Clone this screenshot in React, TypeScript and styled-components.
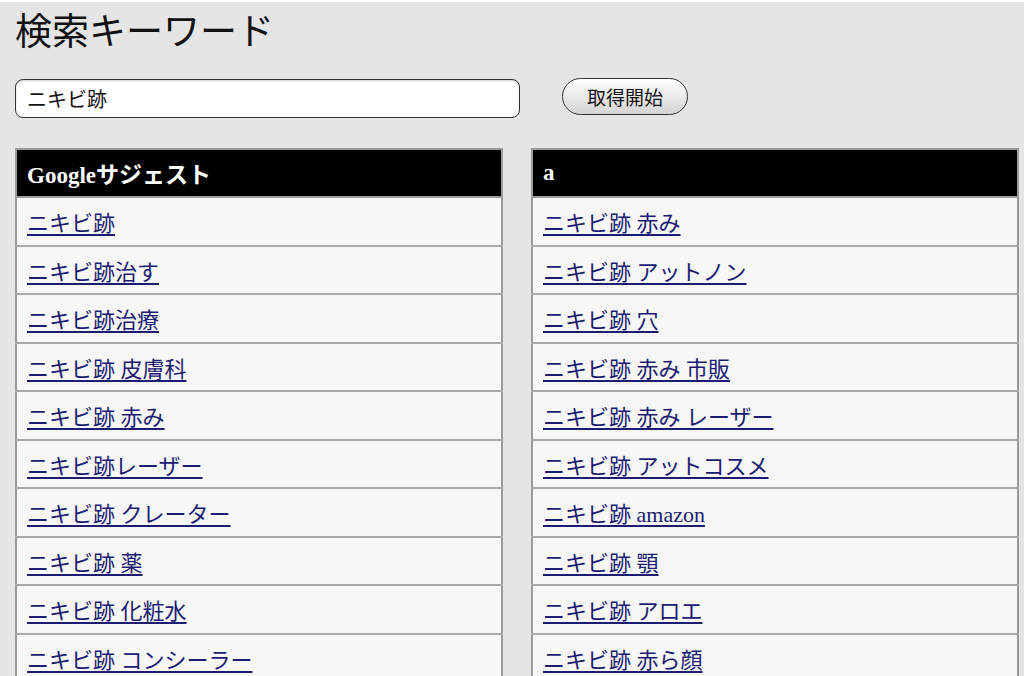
import styled, { createGlobalStyle } from 'styled-components'

const GlobalStyle = createGlobalStyle`
  html, body {
    margin: 0;
    padding: 0;
    background: #e5e5e5;
  }
  body {
    border-top: 2px solid #ffffff;
    font-family: 'Liberation Serif', 'Noto Sans CJK JP', serif;
  }
`

const Page = styled.div`
  padding: 0 0 0 15px;
  width: 1004px;
`

const Title = styled.h1`
  margin: 0;
  padding-top: 9px;
  height: 67px;
  font-size: 37px;
  font-weight: normal;
  line-height: 44px;
  color: #111;
`

const SearchRow = styled.div`
  display: flex;
  align-items: center;
  gap: 42px;
  height: 40px;
`

const KeywordInput = styled.input`
  box-sizing: border-box;
  width: 505px;
  height: 39px;
  padding: 0 11px;
  border: 1.5px solid #333;
  border-radius: 8px;
  background: #fff;
  font-family: 'Noto Sans CJK JP', sans-serif;
  font-size: 20px;
  color: #111;
  outline: none;
  box-shadow: inset 0 1px 2px rgba(0, 0, 0, 0.2);
`

const StartButton = styled.button`
  box-sizing: border-box;
  width: 126px;
  height: 37px;
  margin-top: -3px;
  border: 1.5px solid #333;
  border-radius: 19px;
  background: linear-gradient(#ffffff, #d4d4d4);
  font-family: 'Noto Sans CJK JP', sans-serif;
  font-size: 19px;
  color: #111;
  padding: 0;
`

const Columns = styled.div`
  display: grid;
  grid-template-columns: 488px 488px;
  gap: 28px;
  margin-top: 30px;
`

const Table = styled.table`
  border-collapse: collapse;
  width: 100%;
  border: 2px solid #9a9a9a;
`

const HeadCell = styled.th`
  height: 46px;
  padding: 0 10px;
  background: #000;
  color: #fff;
  text-align: left;
  font-size: 23px;
  font-weight: bold;
  border-bottom: 2px solid #9a9a9a;
`

const Cell = styled.td`
  height: 46.5px;
  padding: 0 10px;
  background: #f7f7f7;
  border-bottom: 2px solid #a8a8a8;
  font-size: 22px;
`

const Link = styled.a`
  color: #1c1c72;
  text-decoration: underline;
  text-underline-offset: 3px;
`

const google = [
  'ニキビ跡',
  'ニキビ跡治す',
  'ニキビ跡治療',
  'ニキビ跡 皮膚科',
  'ニキビ跡 赤み',
  'ニキビ跡レーザー',
  'ニキビ跡 クレーター',
  'ニキビ跡 薬',
  'ニキビ跡 化粧水',
  'ニキビ跡 コンシーラー',
]

const letterA = [
  'ニキビ跡 赤み',
  'ニキビ跡 アットノン',
  'ニキビ跡 穴',
  'ニキビ跡 赤み 市販',
  'ニキビ跡 赤み レーザー',
  'ニキビ跡 アットコスメ',
  'ニキビ跡 amazon',
  'ニキビ跡 顎',
  'ニキビ跡 アロエ',
  'ニキビ跡 赤ら顔',
]

function SuggestTable({ title, items }: { title: string; items: string[] }) {
  return (
    <Table>
      <thead>
        <tr>
          <HeadCell>{title}</HeadCell>
        </tr>
      </thead>
      <tbody>
        {items.map((item) => (
          <tr key={item}>
            <Cell>
              <Link href="#">{item}</Link>
            </Cell>
          </tr>
        ))}
      </tbody>
    </Table>
  )
}

export default function App() {
  return (
    <>
      <GlobalStyle />
      <Page>
        <Title>検索キーワード</Title>
        <SearchRow>
          <KeywordInput defaultValue="ニキビ跡" />
          <StartButton>取得開始</StartButton>
        </SearchRow>
        <Columns>
          <SuggestTable title="Googleサジェスト" items={google} />
          <SuggestTable title="a" items={letterA} />
        </Columns>
      </Page>
    </>
  )
}
